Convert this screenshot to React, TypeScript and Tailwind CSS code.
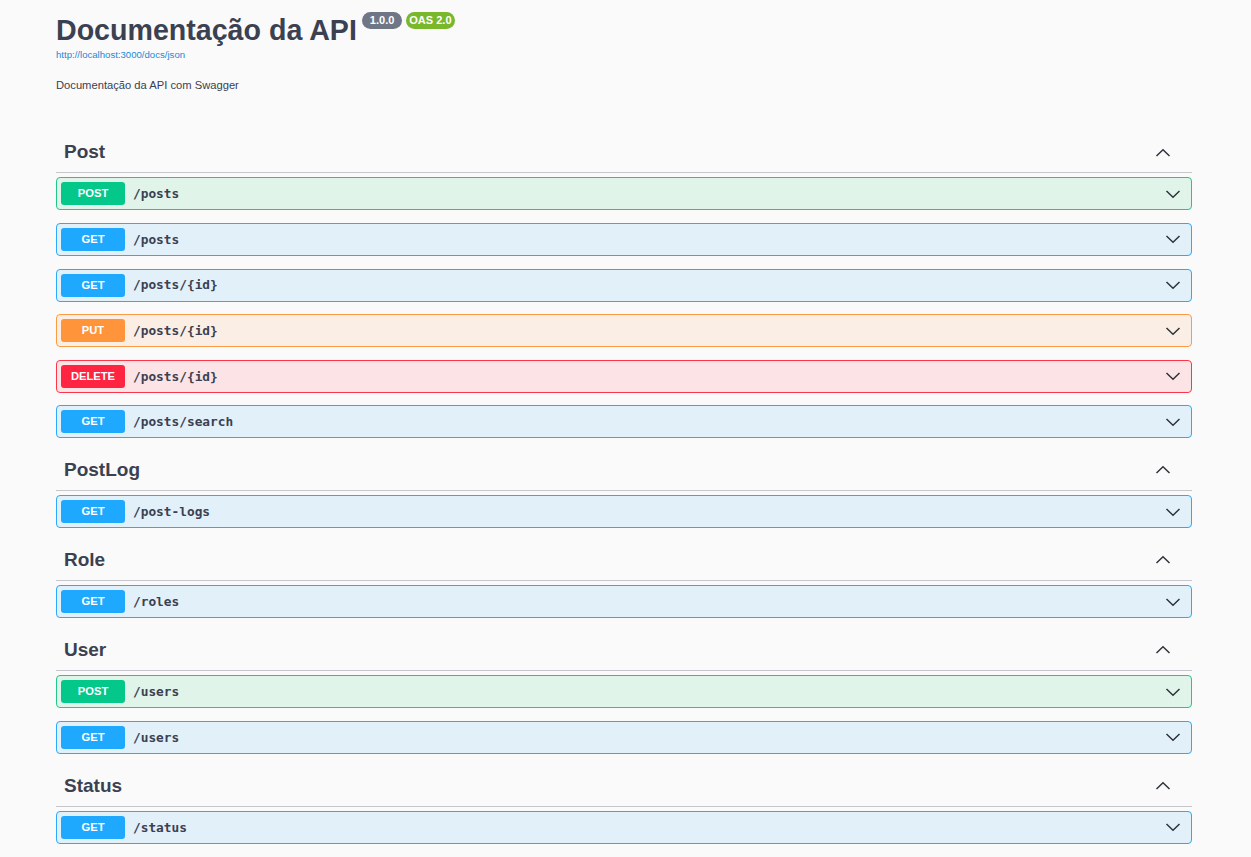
import React from 'react'

type Method = 'POST' | 'GET' | 'PUT' | 'DELETE'

const methodStyles: Record<Method, { row: string; badge: string }> = {
  POST: { row: 'bg-[#e0f4ea] border-[#23c68d]', badge: 'bg-[#04c78a]' },
  GET: { row: 'bg-[#e2f0f9] border-[#2ba9fb]', badge: 'bg-[#1ea9ff]' },
  PUT: { row: 'bg-[#fbeee5] border-[#fd9a45]', badge: 'bg-[#ff943b]' },
  DELETE: { row: 'bg-[#fce4e6] border-[#fc3549]', badge: 'bg-[#ff2441]' },
}

const sections: { tag: string; ops: { method: Method; path: string }[] }[] = [
  {
    tag: 'Post',
    ops: [
      { method: 'POST', path: '/posts' },
      { method: 'GET', path: '/posts' },
      { method: 'GET', path: '/posts/{id}' },
      { method: 'PUT', path: '/posts/{id}' },
      { method: 'DELETE', path: '/posts/{id}' },
      { method: 'GET', path: '/posts/search' },
    ],
  },
  { tag: 'PostLog', ops: [{ method: 'GET', path: '/post-logs' }] },
  { tag: 'Role', ops: [{ method: 'GET', path: '/roles' }] },
  {
    tag: 'User',
    ops: [
      { method: 'POST', path: '/users' },
      { method: 'GET', path: '/users' },
    ],
  },
  { tag: 'Status', ops: [{ method: 'GET', path: '/status' }] },
]

const ChevronDown = () => (
  <svg width="16" height="10" viewBox="0 0 16 10" fill="none">
    <path d="M1.5 2 L8 8.2 L14.5 2" stroke="#2f333b" strokeWidth="1.5" />
  </svg>
)

const ChevronUp = () => (
  <svg width="16" height="10" viewBox="0 0 16 10" fill="none">
    <path d="M1.5 8 L8 1.8 L14.5 8" stroke="#2f333b" strokeWidth="1.5" />
  </svg>
)

const OpRow = ({ method, path }: { method: Method; path: string }) => {
  const s = methodStyles[method]
  return (
    <div className={`flex items-center h-[33px] mb-[12.6px] border rounded-[4px] pl-[4px] pr-[10px] ${s.row}`}>
      <span
        className={`w-[64px] h-[23px] rounded-[3px] flex items-center justify-center text-white font-bold text-[11.2px] font-['Liberation_Sans',sans-serif] ${s.badge}`}
      >
        {method}
      </span>
      <span className="ml-[8px] flex-1 text-[12.8px] font-bold text-[#3b4151] font-['DejaVu_Sans_Mono',monospace]">
        {path}
      </span>
      <ChevronDown />
    </div>
  )
}

export default function App() {
  return (
    <div className="min-h-screen bg-[#fafafa] font-['Liberation_Sans',sans-serif] text-[#3b4151]">
      <div className="pl-[56px] w-[1192px]">
        <div className="pt-[12px] flex items-start">
          <h1 className="text-[28.6px] leading-[36px] font-bold text-[#3b4151]">Documentação da API</h1>
          <div className="ml-[5px] flex gap-[4px]">
            <span className="h-[17px] px-[8px] rounded-full bg-[#6f7686] text-white text-[11px] font-bold leading-[17px]">1.0.0</span>
            <span className="h-[17px] px-[3px] rounded-full bg-[#79b82b] text-white text-[11px] font-bold leading-[17px]">OAS 2.0</span>
          </div>
        </div>
        <div className="mt-[1px] text-[9.6px] leading-[12px] text-[#1b89d6]">http://localhost:3000/docs/json</div>
        <p className="mt-[17px] text-[11.2px] leading-[14px] text-[#3b4151]">Documentação da API com Swagger</p>

        <div className="mt-[41px]">
          {sections.map((sec) => (
            <div key={sec.tag}>
              <div className="h-[40px] mb-[4.4px] flex items-center justify-between border-b border-[#c5c7cc] pl-[8px] pr-[21px]">
                <span className="text-[19px] font-bold text-[#3b4151]">{sec.tag}</span>
                <ChevronUp />
              </div>
              {sec.ops.map((op, i) => (
                <OpRow key={i} method={op.method} path={op.path} />
              ))}
            </div>
          ))}
        </div>
      </div>
    </div>
  )
}
